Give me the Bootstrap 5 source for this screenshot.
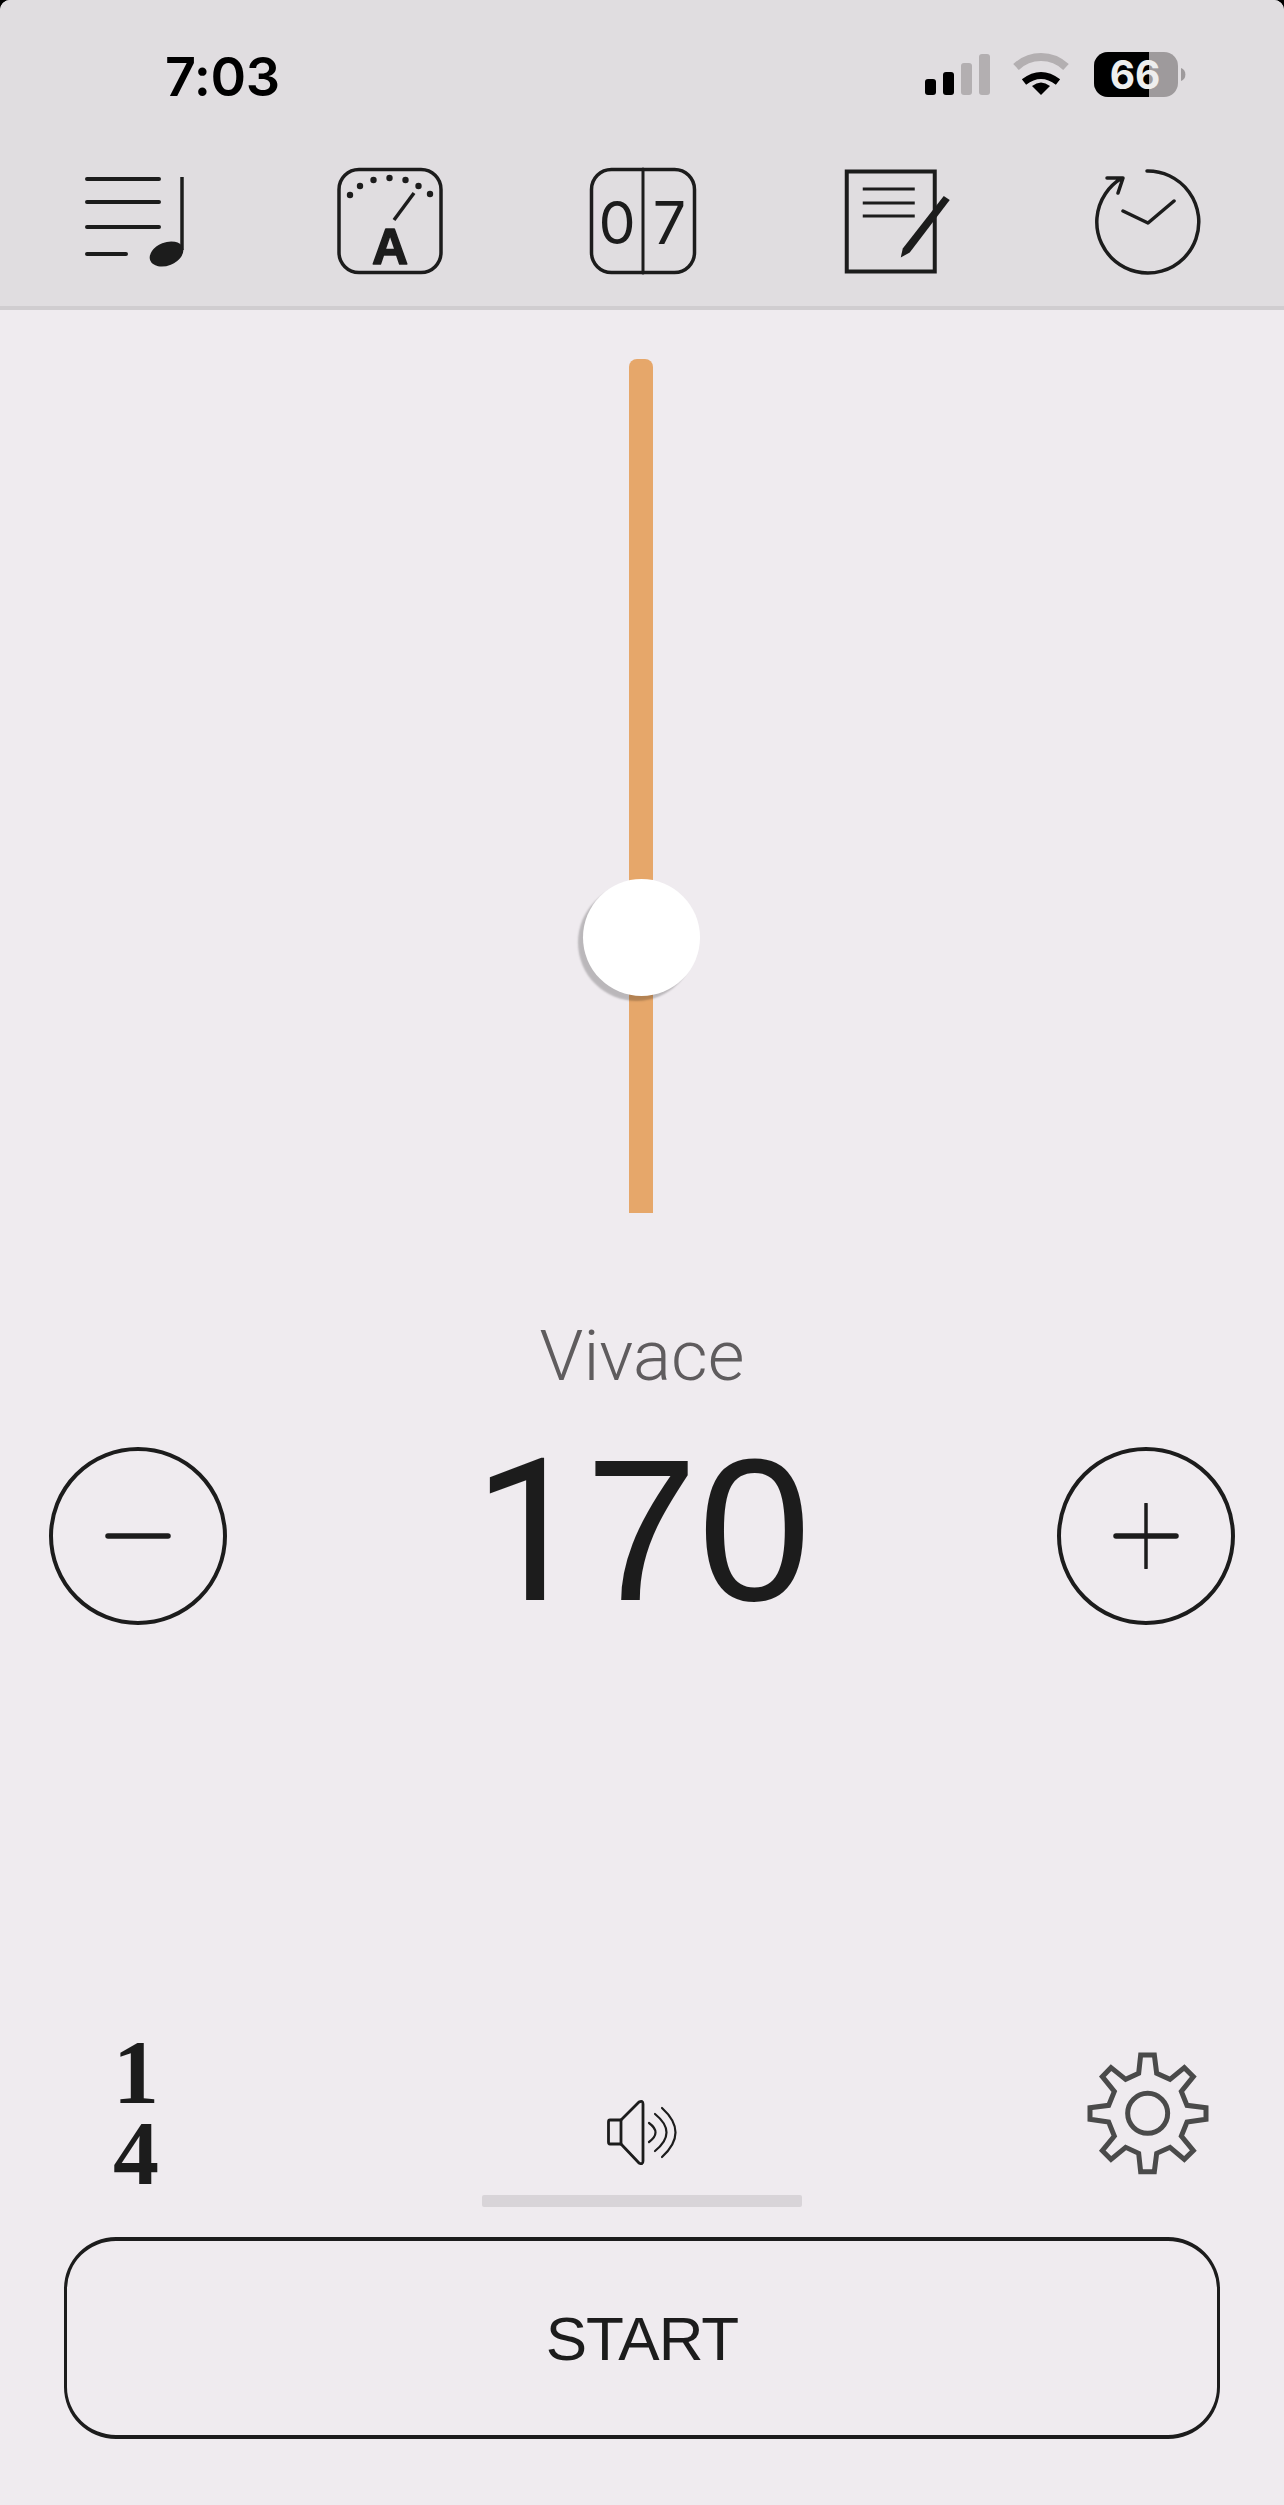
<!DOCTYPE html>
<html lang="en">
<head>
    <meta charset="UTF-8">
    <meta name="viewport" content="width=device-width, initial-scale=1.0">
    <title>Metronome</title>
    <link href="https://cdn.jsdelivr.net/npm/bootstrap@5.3.2/dist/css/bootstrap.min.css" rel="stylesheet">

    <style>
        html, body {
            background: #000;
        }

        .app-page {
            width: 1284px;
            height: 2505px;
            background: #efebef;
            border-radius: 10px 10px 0 0;
            font-family: "Liberation Sans", Arial, sans-serif;
            color: #1c1c1c;
        }

        .top-area {
            height: 310px;
            background: #e0dde0;
            border-bottom: 4px solid #d0cdd0;
            border-radius: 10px 10px 0 0;
        }

        .status-row {
            height: 160px;
            padding: 46px 94px 0 165px;
        }

        .status-icons {
            margin-top: 3px;
        }

        .clock-text {
            font-family: Inter, sans-serif;
            font-weight: 600;
            font-size: 54px;
            line-height: 62px;
            letter-spacing: -.5px;
            color: #000;
        }

        .tool-row {
            padding: 0 81px 0 78px;
        }

        .tool-row svg {
            width: 110px;
            height: 120px;
            display: block;
            overflow: visible;
        }

        .tool-digit {
            font-family: Inter, sans-serif;
            font-weight: 400;
            font-size: 59px;
            text-anchor: middle;
            fill: #1c1c1c;
        }

        .tool-letter {
            font-family: "Liberation Sans", sans-serif;
            font-weight: 700;
            font-size: 50px;
            text-anchor: middle;
            fill: #1c1c1c;
            stroke: #1c1c1c;
            stroke-width: 1.5;
            stroke-linejoin: round;
        }

        .line-icon {
            fill: none;
            stroke: #1c1c1c;
            stroke-width: 3.5;
            stroke-linecap: round;
            stroke-linejoin: round;
        }

        .slider-track {
            width: 24px;
            height: 854px;
            margin-top: 49px;
            margin-right: 2px;
            background: #e6a76a;
            border-radius: 8px 8px 0 0;
        }

        .slider-thumb {
            width: 117px;
            height: 117px;
            top: 520px;
            left: -46px;
            background: #fff;
            box-shadow: -5px 5px 2px rgba(0, 0, 0, .22);
        }

        .tempo-name {
            margin-top: 103px;
            font-family: Roboto, sans-serif;
            font-weight: 300;
            font-size: 71px;
            line-height: 80px;
            color: #5f5c5e;
        }

        .tempo-row {
            margin-top: 51px;
            padding: 0 49px;
        }

        .tempo-btn {
            width: 178px;
            height: 178px;
            padding: 0;
            background: transparent;
            border: 4px solid #1c1c1c;
            border-radius: 50%;
        }

        .tempo-value {
            font-size: 203px;
            line-height: 177px;
            margin-top: -10px;
        }

        /* the 1 of the reference has no foot, Roboto's is the closer one */
        .tempo-one {
            font-family: Roboto, sans-serif;
            font-size: 199px;
        }

        .bottom-row {
            padding: 0 65px;
        }

        .side-col {
            width: 142px;
        }

        .beat-sig {
            font-family: "Liberation Serif", serif;
            font-weight: 700;
            font-size: 92px;
            line-height: 81px;
            padding-bottom: 13px;
        }

        .sound-bar {
            width: 320px;
            height: 12px;
            margin-top: 30px;
            background: #d8d4d8;
            border-radius: 2px;
        }

        .gear-icon {
            margin: 0 -11px 7px 0;
        }

        .start-btn {
            width: 1156px;
            height: 202px;
            margin: 30px 0 66px 64px;
            background: transparent;
            border: solid #1c1c1c;
            border-width: 4px 3px;
            border-radius: 52px;
            font-size: 62px;
            letter-spacing: -1px;
            color: #1c1c1c;
        }
    </style>
</head>
<body>
    <div class="app-page d-flex flex-column">
        <header class="top-area">
            <div class="status-row d-flex justify-content-between align-items-start">
                <span class="clock-text">7:03</span>
                <svg class="status-icons" width="265" height="50" viewBox="925 50 265 50">
                    <rect x="925" y="80" width="11" height="16" rx="3"/>
                    <rect x="943" y="73" width="11" height="23" rx="3"/>
                    <rect x="961" y="64" width="11" height="32" rx="3" fill="#b3afb1"/>
                    <rect x="979" y="55" width="11" height="41" rx="3" fill="#b3afb1"/>
                    <path d="M1016 68A36 36 0 0 1 1066 68" fill="none" stroke="#b3afb1" stroke-width="8"/>
                    <path d="M1024 83Q1041 70 1058 83" fill="none" stroke="#000" stroke-width="7"/>
                    <path d="M1041 96L1032 87Q1041 80 1050 87Z"/>
                    <clipPath id="batteryLeft"><rect x="1090" y="50" width="59" height="50"/></clipPath>
                    <rect x="1094" y="53" width="84" height="45" rx="14" fill="#9e9a9c"/>
                    <rect x="1094" y="53" width="84" height="45" rx="14" clip-path="url(#batteryLeft)"/>
                    <path d="M1181 69A7 7 0 0 1 1181 82Z" fill="#9e9a9c"/>
                    <text x="1135" y="90" text-anchor="middle" font-family="Inter, sans-serif" font-weight="700" font-size="39" fill="#eeeeee">66</text>
                </svg>
            </div>
            <nav class="tool-row d-flex justify-content-between">
                <svg viewBox="78 160 110 120">
                    <g class="line-icon" style="stroke-width:4">
                        <path d="M87 179H159M87 202H159M87 227H159M87 254H126"/>
                    </g>
                    <path d="M182 177V250" class="line-icon" style="stroke-linecap:butt"/>
                    <ellipse cx="166.5" cy="254" rx="17.5" ry="11.5" transform="rotate(-22 166.5 254)" fill="#1c1c1c"/>
                </svg>
                <svg viewBox="332 160 110 120">
                    <rect x="339" y="169.500" width="102" height="103" rx="20" class="line-icon"/>
                    <g fill="#1c1c1c">
                        <circle cx="350" cy="195" r="3.200"/>
                        <circle cx="360" cy="186" r="3.200"/>
                        <circle cx="373.500" cy="180" r="3.200"/>
                        <circle cx="389.500" cy="178" r="3.200"/>
                        <circle cx="405.500" cy="180" r="3.200"/>
                        <circle cx="418.500" cy="186" r="3.200"/>
                        <circle cx="430" cy="194" r="3.200"/>
                    </g>
                    <path d="M414 193L394 220" class="line-icon" style="stroke-linecap:butt"/>
                    <text x="390" y="264" class="tool-letter">A</text>
                </svg>
                <svg viewBox="585.500 160 110 120">
                    <rect x="591" y="169.500" width="103" height="103" rx="20" class="line-icon"/>
                    <path d="M642.500 169V273" class="line-icon" style="stroke-width:3"/>
                    <text x="616.500" y="244" class="tool-digit">0</text>
                    <text x="669" y="244" class="tool-digit">7</text>
                </svg>
                <svg viewBox="839.250 160 110 120">
                    <rect x="847" y="171.500" width="88" height="100" class="line-icon" style="stroke-linejoin:miter;stroke-width:4"/>
                    <path d="M863 189H915M863 203H915M863 216H915" class="line-icon" style="stroke-linecap:butt;stroke-width:3"/>
                    <path d="M944 196L950 200L910 252.500L901 257.500L903 248.500Z" fill="#1c1c1c"/>
                </svg>
                <svg viewBox="1093 160 110 120">
                    <path d="M1147 171A51 51 0 1 1 1122 178M1107 178L1123 178L1118 193M1123 211L1148 223L1174 201" class="line-icon" style="stroke-width:3.500"/>
                </svg>
            </nav>
        </header>

        <main class="flex-grow-1 d-flex flex-column">
            <div class="slider-track position-relative align-self-center">
                <div class="slider-thumb position-absolute rounded-circle"></div>
            </div>

            <div class="tempo-name text-center">Vivace</div>

            <div class="tempo-row d-flex justify-content-between align-items-center">
                <button type="button" class="tempo-btn d-flex align-items-center justify-content-center">
                    <svg width="66" height="8" viewBox="0 0 66 8"><path d="M3 4H63" stroke="#1c1c1c" stroke-width="5.500" stroke-linecap="round"/></svg>
                </button>
                <div class="tempo-value"><span class="tempo-one">1</span>70</div>
                <button type="button" class="tempo-btn d-flex align-items-center justify-content-center">
                    <svg width="66" height="66" viewBox="0 0 66 66"><path d="M3 33H63" stroke="#1c1c1c" stroke-width="5.500" stroke-linecap="round"/><path d="M33 1V65" stroke="#1c1c1c" stroke-width="3.500" stroke-linecap="round"/></svg>
                </button>
            </div>

            <div class="bottom-row d-flex justify-content-between align-items-end mt-auto">
                <div class="side-col beat-sig text-center">
                    <div>1</div>
                    <div>4</div>
                </div>
                <div class="d-flex flex-column align-items-center">
                    <svg width="70" height="66" viewBox="607 2098 70 66">
                        <g class="line-icon">
                            <path d="M621 2119H610Q608.500 2119 608.500 2121V2141Q608.500 2143 610 2143H621Z" style="stroke-width:2.800"/>
                            <path d="M621 2119L639 2101Q643 2099 643 2103V2160Q643 2164 639 2162L621 2143" style="stroke-width:2.800"/>
                            <path d="M649 2122Q662 2131.500 649 2141M655 2113Q678 2131.500 655 2150M662 2107Q689 2131.500 662 2156" style="stroke-width:2.200"/>
                        </g>
                    </svg>
                    <div class="sound-bar"></div>
                </div>
                <div class="side-col d-flex justify-content-end">
                    <svg class="gear-icon flex-shrink-0" width="170" height="170" viewBox="0 0 510 510">
                        <path d="M242 75H283L290 130L330 148L373 113L400 140L364 184L381 226L438 233V268L381 276L364 318L400 362L373 388L330 352L290 370L283 425H242L236 370L197 352L153 388L127 362L163 318L146 276L90 268V233L146 226L163 184L127 140L153 113L197 148L236 130Z" fill="none" stroke="#4a4a4a" stroke-width="15"/>
                        <circle cx="263" cy="250" r="60" fill="none" stroke="#4a4a4a" stroke-width="15"/>
                    </svg>
                </div>
            </div>

            <button type="button" class="start-btn">START</button>
        </main>
    </div>
</body>
</html>
